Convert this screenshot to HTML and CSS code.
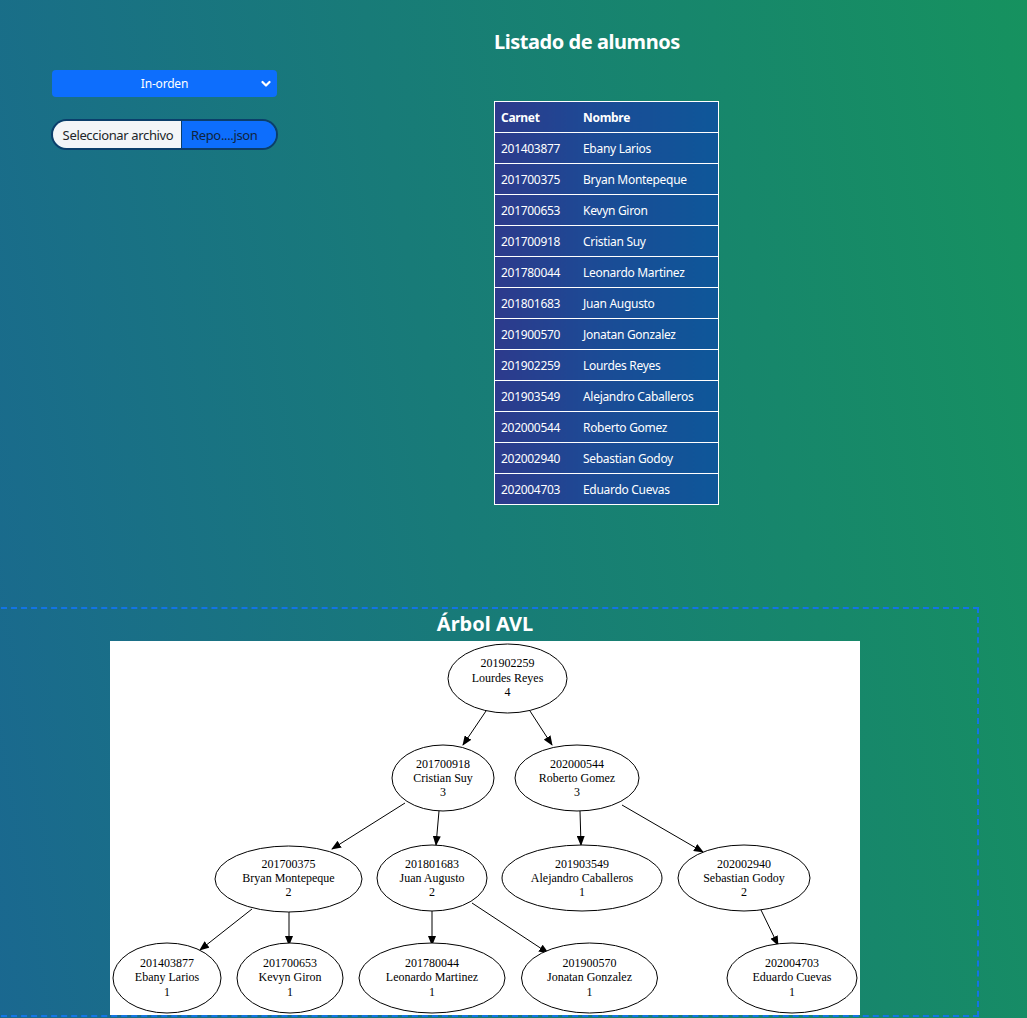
FILE: index.html
```html
<!DOCTYPE html>
<html lang="es">
<head>
<meta charset="utf-8">
<title>Listado de alumnos</title>
<link rel="stylesheet" href="styles.css">
</head>
<body>
<div class="page">
  <section class="top">
    <div class="controls">
      <div class="select">
        <span class="select-label">In-orden</span>
        <svg class="chev" width="10" height="8" viewBox="0 0 10 8"><path d="M1.5 2 L5 5.5 L8.5 2" fill="none" stroke="#fff" stroke-width="2.2" stroke-linecap="round" stroke-linejoin="round"/></svg>
      </div>
      <div class="file">
        <span class="file-btn">Seleccionar archivo</span>
        <span class="file-name">Repo....json</span>
      </div>
    </div>
    <div class="listing">
      <h1 class="title">Listado de alumnos</h1>
      <table class="students">
        <thead><tr><th>Carnet</th><th>Nombre</th></tr></thead>
        <tbody>
          <tr><td>201403877</td><td>Ebany Larios</td></tr>
          <tr><td>201700375</td><td>Bryan Montepeque</td></tr>
          <tr><td>201700653</td><td>Kevyn Giron</td></tr>
          <tr><td>201700918</td><td>Cristian Suy</td></tr>
          <tr><td>201780044</td><td>Leonardo Martinez</td></tr>
          <tr><td>201801683</td><td>Juan Augusto</td></tr>
          <tr><td>201900570</td><td>Jonatan Gonzalez</td></tr>
          <tr><td>201902259</td><td>Lourdes Reyes</td></tr>
          <tr><td>201903549</td><td>Alejandro Caballeros</td></tr>
          <tr><td>202000544</td><td>Roberto Gomez</td></tr>
          <tr><td>202002940</td><td>Sebastian Godoy</td></tr>
          <tr><td>202004703</td><td>Eduardo Cuevas</td></tr>
        </tbody>
      </table>
    </div>
  </section>

  <section class="tree-box">
    <h2 class="tree-title">Árbol AVL</h2>
    <div class="graph">
      <svg width="750" height="374" viewBox="0 0 750 374" class="graph-svg">
        <defs>
          <marker id="arr" markerWidth="10" markerHeight="8" refX="9" refY="4" orient="auto" markerUnits="userSpaceOnUse">
            <path d="M0 0 L10 4 L0 8 Z" fill="#000"/>
          </marker>
        </defs>
        <g stroke="#000" stroke-width="1" fill="none" marker-end="url(#arr)">
          <line x1="376" y1="70" x2="353" y2="104"/>
          <line x1="420" y1="70" x2="442" y2="104"/>
          <line x1="295" y1="162" x2="222" y2="208"/>
          <line x1="329" y1="170" x2="326" y2="204"/>
          <line x1="470" y1="170" x2="471" y2="204"/>
          <line x1="512" y1="164" x2="593" y2="211"/>
          <line x1="142" y1="268" x2="90" y2="309"/>
          <line x1="179" y1="271" x2="179" y2="304"/>
          <line x1="322" y1="269" x2="322" y2="304"/>
          <line x1="362" y1="262" x2="438" y2="312"/>
          <line x1="651" y1="269" x2="668" y2="304"/>
        </g>
        <g fill="#fff" stroke="#000" stroke-width="1">
          <ellipse cx="397.5" cy="37.5" rx="59.5" ry="34.5"/>
          <ellipse cx="333" cy="137" rx="51" ry="33"/>
          <ellipse cx="467" cy="137" rx="62" ry="33"/>
          <ellipse cx="178.5" cy="238" rx="73.5" ry="33"/>
          <ellipse cx="322" cy="237" rx="55" ry="33"/>
          <ellipse cx="472" cy="237" rx="80" ry="33"/>
          <ellipse cx="634" cy="237" rx="66" ry="33"/>
          <ellipse cx="57" cy="337" rx="54" ry="35"/>
          <ellipse cx="180" cy="337" rx="53" ry="35"/>
          <ellipse cx="322" cy="337" rx="73" ry="35"/>
          <ellipse cx="479.5" cy="337" rx="68" ry="35"/>
          <ellipse cx="682" cy="337" rx="65" ry="35"/>
        </g>
        <g class="lbl" text-anchor="middle">
          <text x="397.5" y="26">201902259</text><text x="397.5" y="41">Lourdes Reyes</text><text x="397.5" y="55">4</text>
          <text x="333" y="127">201700918</text><text x="333" y="141">Cristian Suy</text><text x="333" y="155">3</text>
          <text x="467" y="127">202000544</text><text x="467" y="141">Roberto Gomez</text><text x="467" y="155">3</text>
          <text x="178.5" y="227">201700375</text><text x="178.5" y="241">Bryan Montepeque</text><text x="178.5" y="255">2</text>
          <text x="322" y="227">201801683</text><text x="322" y="241">Juan Augusto</text><text x="322" y="255">2</text>
          <text x="472" y="227">201903549</text><text x="472" y="241">Alejandro Caballeros</text><text x="472" y="255">1</text>
          <text x="634" y="227">202002940</text><text x="634" y="241">Sebastian Godoy</text><text x="634" y="255">2</text>
          <text x="57" y="326">201403877</text><text x="57" y="340">Ebany Larios</text><text x="57" y="355">1</text>
          <text x="180" y="326">201700653</text><text x="180" y="340">Kevyn Giron</text><text x="180" y="355">1</text>
          <text x="322" y="326">201780044</text><text x="322" y="340">Leonardo Martinez</text><text x="322" y="355">1</text>
          <text x="479.5" y="326">201900570</text><text x="479.5" y="340">Jonatan Gonzalez</text><text x="479.5" y="355">1</text>
          <text x="682" y="326">202004703</text><text x="682" y="340">Eduardo Cuevas</text><text x="682" y="355">1</text>
        </g>
      </svg>
    </div>
  </section>
</div>
</body>
</html>
```

FILE: styles.css
```css
html, body {
  margin: 0;
  padding: 0;
}
body {
  font-family: "Noto Sans", "Open Sans", sans-serif;
  color: #fff;
  background: linear-gradient(80deg, #1a6890 0%, #187b78 45%, #16925f 100%);
  min-height: 1018px;
  overflow: hidden;
}
.page {
  width: 1027px;
}
.top {
  display: flex;
  align-items: flex-start;
}
.controls {
  width: 494px;
  flex: none;
  box-sizing: border-box;
  padding-left: 51px;
  padding-top: 70px;
  display: flex;
  flex-direction: column;
  gap: 22px;
}
.select {
  width: 225px;
  height: 27px;
  margin-left: 1px;
  box-sizing: border-box;
  background: #0d6efd;
  border-radius: 4px;
  display: flex;
  align-items: center;
  justify-content: center;
  position: relative;
  font-size: 12px;
  letter-spacing: -0.2px;
  color: #fff;
}
.chev {
  position: absolute;
  right: 6px;
  top: 10px;
}
.file {
  width: 227px;
  height: 31px;
  box-sizing: border-box;
  border: 2px solid #0b3e6b;
  border-radius: 16px;
  overflow: hidden;
  display: flex;
  font-size: 13px;
  letter-spacing: -0.35px;
  color: #212529;
}
.file-btn {
  width: 129px;
  flex: none;
  background: #f3f5f8;
  border-right: 1px solid #0b3e6b;
  display: flex;
  align-items: center;
  justify-content: center;
  padding-left: 2px;
  box-sizing: border-box;
}
.file-name {
  flex: 1;
  background: #0d6efd;
  display: flex;
  align-items: center;
  padding-left: 9px;
  color: #10243e;
}
.listing {
  padding-top: 28px;
}
.title {
  margin: 0 0 46px 0;
  font-size: 20px;
  font-weight: 700;
  line-height: 27px;
  letter-spacing: -0.45px;
}
.students {
  width: 225px;
  border-collapse: collapse;
  border: 1px solid #fff;
  background: linear-gradient(90deg, #2d3a8c 0%, #1a4c96 50%, #0e5799 100%);
  font-size: 12px;
  letter-spacing: -0.3px;
}
.students th, .students td {
  text-align: left;
  height: 30px;
  padding: 0 0 0 6px;
  border-bottom: 1px solid #fff;
  font-weight: 400;
}
.students th {
  font-weight: 700;
}
.students th:first-child, .students td:first-child {
  width: 76px;
}
.tree-box {
  margin-top: 102px;
  margin-left: -9px;
  width: 988px;
  box-sizing: border-box;
  border: 2px dashed #1374e6;
  display: flex;
  flex-direction: column;
  align-items: center;
}
.tree-title {
  margin: 2px 0 4px 0;
  font-size: 20px;
  font-weight: 700;
  line-height: 26px;
}
.graph {
  width: 750px;
  height: 374px;
  background: #fff;
}
.graph-svg {
  display: block;
}
.lbl text {
  font-family: "Liberation Serif", serif;
  font-size: 12px;
  fill: #000;
}
```
